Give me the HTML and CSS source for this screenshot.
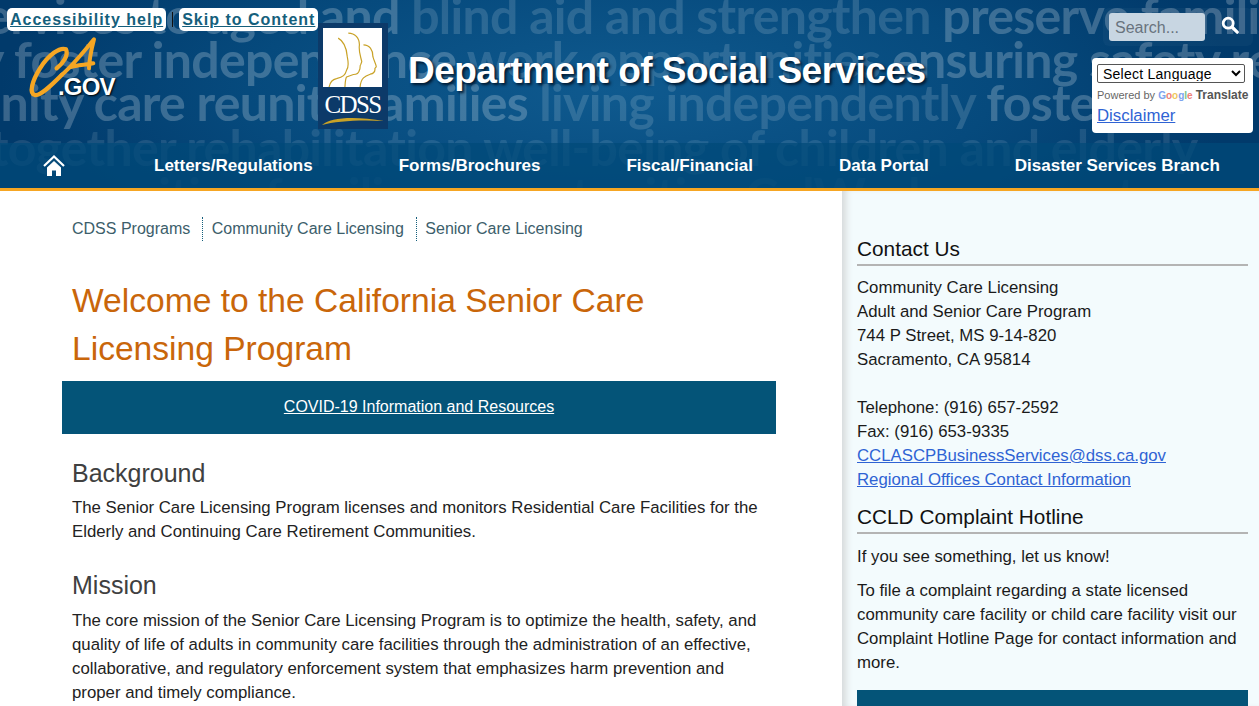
FILE: index.html
```html
<!DOCTYPE html>
<html lang="en">
<head>
<meta charset="utf-8">
<title>Senior Care Licensing</title>
<link rel="stylesheet" href="styles.css">
</head>
<body>
<header class="site-head">
  <div class="words" aria-hidden="true">
    <span class="w w1">services to aged and <i>blind aid and strengthen</i> preserve families</span>
    <span class="w w2">y foster independence <i>work opportunities</i> ensuring safety res</span>
    <span class="w w3">unity care reunite families <i>living independently</i> foster L</span>
    <span class="w w4">together rehabilitation well-being of children and elderly</span>
    <span class="w w5">reuniting families opportunities CalWorks support</span>
  </div>
  <div class="top">
    <div class="skip">
      <a href="#" class="skip-link">Accessibility help</a>
      <span class="skip-sep"></span>
      <a href="#" class="skip-link">Skip to Content</a>
    </div>
    <div class="brand">
      <div class="ca-logo">
        <svg class="ca-svg" viewBox="0 0 330 240" width="110" height="80">
          <path d="M110 115C130 100 146 75 138 58 120 50 85 75 60 115 38 150 25 190 45 195 62 198 95 165 125 135" fill="none" stroke="#f5a623" stroke-width="13" stroke-linecap="round" stroke-linejoin="round"/>
          <path d="M125 135C160 105 195 60 222 28 215 55 208 85 207 115M150 112C170 105 195 105 220 100" fill="none" stroke="#f5a623" stroke-width="12" stroke-linecap="round" stroke-linejoin="round"/>
        </svg>
        <span class="ca-gov">.GOV</span>
      </div>
      <div class="cdss">
        <div class="cdss-pic">
          <svg viewBox="0 0 175 175" width="59" height="59">
            <path d="M45 30C60 38 70 60 72 85 75 100 78 115 70 125 66 140 60 145 40 150 25 153 20 165 18 175M75 15C95 15 108 30 108 50 105 70 112 85 115 100L112 108C108 112 112 118 108 125 106 135 100 138 90 138L70 145C66 150 66 165 65 175M120 50C138 50 148 65 148 85 152 100 158 108 158 115L154 120C155 128 150 135 140 137 125 142 112 148 110 175" fill="none" stroke="#c9a227" stroke-width="3.5"/>
          </svg>
        </div>
        <span class="cdss-name">CDSS</span>
        <svg class="swoosh" viewBox="0 0 62 8" width="62" height="8"><path d="M0 8C8 0 34-1 62 4 38 2.5 14 4 0 8z" fill="#c9a227"/></svg>
      </div>
      <div class="dept">Department of Social Services</div>
    </div>
    <div class="tools">
      <form class="search">
        <input class="search-in" type="text" placeholder="Search...">
        <svg class="search-ic" viewBox="0 0 18 18" width="18" height="18"><circle cx="7.2" cy="7.2" r="5" fill="none" stroke="#fff" stroke-width="2.8"/><path d="M11 11l5.2 5.2" stroke="#fff" stroke-width="3.2" stroke-linecap="round"/></svg>
      </form>
      <div class="translate">
        <select class="lang"><option>Select Language</option></select>
        <div class="powered">Powered by <span class="g-word"><b class="gb">G</b><b class="gr">o</b><b class="gy">o</b><b class="gb">g</b><b class="gg">l</b><b class="gr">e</b></span> <span class="tr">Translate</span></div>
        <a href="#" class="disc">Disclaimer</a>
      </div>
    </div>
  </div>
  <nav class="nav">
    <a href="#" class="nav-home" aria-label="Home">
      <svg viewBox="0 0 22 22" width="22" height="22"><path d="M1 11L11 1.5 21 11" fill="none" stroke="#fff" stroke-width="2.2"/><path d="M4 12.5L11 6l7 6.5V21h-5v-5.5H9V21H4z" fill="#fff"/></svg>
    </a>
    <a href="#">Letters/Regulations</a>
    <a href="#">Forms/Brochures</a>
    <a href="#">Fiscal/Financial</a>
    <a href="#">Data Portal</a>
    <a href="#">Disaster Services Branch</a>
  </nav>
</header>
<div class="page">
  <main class="main">
    <ul class="crumbs">
      <li><a href="#">CDSS Programs</a></li>
      <li><a href="#">Community Care Licensing</a></li>
      <li><a href="#">Senior Care Licensing</a></li>
    </ul>
    <h1 class="title">Welcome to the California Senior Care Licensing Program</h1>
    <div class="covid"><a href="#">COVID-19 Information and Resources</a></div>
    <h2 class="sec">Background</h2>
    <p class="para">The Senior Care Licensing Program licenses and monitors Residential Care Facilities for the Elderly and Continuing Care Retirement Communities.</p>
    <h2 class="sec sec-m">Mission</h2>
    <p class="para para-m">The core mission of the Senior Care Licensing Program is to optimize the health, safety, and quality of life of adults in community care facilities through the administration of an effective, collaborative, and regulatory enforcement system that emphasizes harm prevention and proper and timely compliance.</p>
  </main>
  <aside class="side">
    <h3 class="side-h side-first">Contact Us</h3>
    <p class="addr">Community Care Licensing<br>Adult and Senior Care Program<br>744 P Street, MS 9-14-820<br>Sacramento, CA 95814<br><br>Telephone: (916) 657-2592<br>Fax: (916) 653-9335<br><a href="#">CCLASCPBusinessServices@dss.ca.gov</a><br><a href="#">Regional Offices Contact Information</a></p>
    <h3 class="side-h side-second">CCLD Complaint Hotline</h3>
    <p class="side-p">If you see something, let us know!</p>
    <p class="side-p">To file a complaint regarding a state licensed community care facility or child care facility visit our Complaint Hotline Page for contact information and more.</p>
    <div class="side-box"></div>
  </aside>
</div>
</body>
</html>
```

FILE: styles.css
```css
* { box-sizing: border-box; }
html, body { margin: 0; padding: 0; height: 706px; overflow: hidden; }
body { font-family: "Liberation Sans", Arial, sans-serif; font-size: 16.8px; line-height: 24px; color: #1a1a1a; background: #fff; }
a { color: #2f63d4; }

.site-head { position: relative; height: 191px; overflow: hidden; background: radial-gradient(ellipse 620px 200px at 620px 90px, #0f5a8f 0%, #064a7d 60%, #013a6b 100%); border-bottom: 3px solid #f6a623; }
.words { position: absolute; inset: 0; font-family: Lato, "Noto Sans", sans-serif; font-weight: 700; font-size: 50px; line-height: 50px; letter-spacing: -.7px; color: #fff; white-space: nowrap; overflow: hidden; }
.w { position: absolute; opacity: .22; }
.w i { font-style: normal; opacity: .65; }
.w1 { left: -37px; top: -10px; }
.w2 { left: -22px; top: 34px; }
.w3 { left: -27px; top: 77px; }
.w4 { left: -10px; top: 122px; opacity: .1; }
.w5 { left: 60px; top: 170px; opacity: .06; }

.top { position: relative; height: 143px; }
.skip { position: absolute; left: 7px; top: 8px; display: flex; align-items: center; font-size: 16px; font-weight: 700; letter-spacing: 1px; line-height: 23px; }
.skip-link { display: block; background: #fff; color: #155f7c; border-radius: 5px; padding: 0 3px; }
.skip-sep { width: 1px; height: 15px; background: #111; margin: 0 6px 0 6px; }

.brand { display: flex; align-items: flex-start; height: 143px; }
.ca-logo { position: relative; width: 318px; height: 143px; flex: none; }
.ca-svg { position: absolute; left: 20px; top: 30px; }
.ca-gov { position: absolute; left: 58px; top: 73px; color: #fff; font-size: 24px; line-height: 28px; font-weight: 700; letter-spacing: -.8px; text-shadow: 1px 1px 2px #000; }
.cdss { flex: none; width: 70px; height: 106px; margin-top: 23px; background: #0c3a69; padding: 5px 6px 0 5px; display: flex; flex-direction: column; align-items: center; }
.cdss-pic { width: 59px; height: 59px; flex: none; background: #fff; }
.cdss-pic svg { display: block; }
.cdss-name { color: #fff; font-family: "Liberation Serif", serif; font-size: 25px; line-height: 24px; letter-spacing: -1.6px; margin-top: 6px; }
.swoosh { margin-top: 0; flex: none; }
.dept { margin: 48px 0 0 20px; font-size: 37px; line-height: 46px; font-weight: 700; color: #fff; letter-spacing: -.52px; white-space: nowrap; text-shadow: 2px 2px 3px #00182f; }

.tools { position: absolute; right: 6px; top: 8px; width: 161px; }
.search { display: flex; align-items: center; width: 150px; height: 38px; margin-left: 11px; padding-left: 6px; background: rgba(255,255,255,.03); border-radius: 6px; }
.search-in { width: 96px; height: 28px; border: 0; border-radius: 3px; background: #c8d6e2; padding: 2px 6px 0; font: 16px "Liberation Sans", Arial, sans-serif; color: #555; }
.search-in::placeholder { color: #68737e; }
.search-ic { margin-left: 16px; margin-top: -5px; }
.translate { margin-top: 12px; height: 75px; background: #fff; border-radius: 4px; padding: 6px 5px; }
.lang { display: block; width: 148px; height: 19px; font: 14px "Liberation Sans", Arial, sans-serif; letter-spacing: .25px; background: #fff; color: #000; border: 1px solid #555; border-radius: 2px; padding: 0 0 1px 1px; }
.powered { font-size: 11px; line-height: 14px; color: #666; margin-top: 5px; white-space: nowrap; }
.g-word { font-size: 10px; }
.g-word b { font-weight: 700; }
.gb { color: #7da3ee; } .gr { color: #ee8179; } .gy { color: #efc75e; } .gg { color: #7cc48d; }
.tr { color: #555; font-weight: 700; font-size: 12px; }
.disc { display: block; font-size: 16.8px; line-height: 20px; margin-top: 3px; }

.nav { position: relative; height: 45px; padding-top: 1px; display: flex; align-items: center; background: rgba(0,74,120,.72); }
.nav a { color: #fff; font-weight: 700; font-size: 17px; text-decoration: none; white-space: nowrap; }
.nav-home { display: block; width: 22px; height: 22px; margin: 0 89px 0 43px; }
.nav a:nth-child(2) { margin-right: 86px; }
.nav a:nth-child(3) { margin-right: 86px; }
.nav a:nth-child(4) { margin-right: 86px; }
.nav a:nth-child(5) { margin-right: 86px; }

.page { display: flex; height: 515px; overflow: hidden; }
.main { flex: none; width: 842px; padding: 0 66px 0 62px; }
.crumbs { list-style: none; margin: 26px 0 0; padding: 0 0 0 10px; display: flex; font-size: 16px; }
.crumbs li { height: 24px; line-height: 24px; padding-right: 12px; margin-right: 8.5px; border-right: 1px dotted #155f7c; }
.crumbs li:last-child { border: 0; }
.crumbs a { color: #3c5e6b; text-decoration: none; }
.title { margin: 36px 0 0; padding: 0 10px; width: 660px; font-size: 33.6px; line-height: 48px; font-weight: 400; color: #c9660a; }
.covid { margin-top: 8px; height: 53px; background: #045478; text-align: center; line-height: 51px; font-size: 16px; }
.covid a { color: #fff; }
.sec { margin: 25px 0 0; padding-left: 10px; font-size: 25px; line-height: 28px; font-weight: 400; color: #404040; }
.sec-m { margin-top: 27px; }
.para { margin: 9px 0 0; padding: 0 10px; color: #222; }
.para-m { margin-top: 10px; }

.side { flex: none; width: 417px; background: #f3fbfd; padding: 45px 11px 0 15px; box-shadow: inset 8px 0 7px -4px #d6d9da; }
.side-h { margin: 0; font-size: 20.8px; line-height: 26px; font-weight: 400; color: #111; border-bottom: 2px solid #b4b4b4; padding-bottom: 2px; }
.addr { margin: 10px 0 0; color: #1a1a1a; }
.addr a { color: #2f63d4; }
.side-second { margin-top: 12px; }
.side-p { margin: 0 0 10px; }
.side-second + .side-p { margin-top: 11px; }
.side-box { margin-top: 15px; height: 30px; background: #045478; }
```
